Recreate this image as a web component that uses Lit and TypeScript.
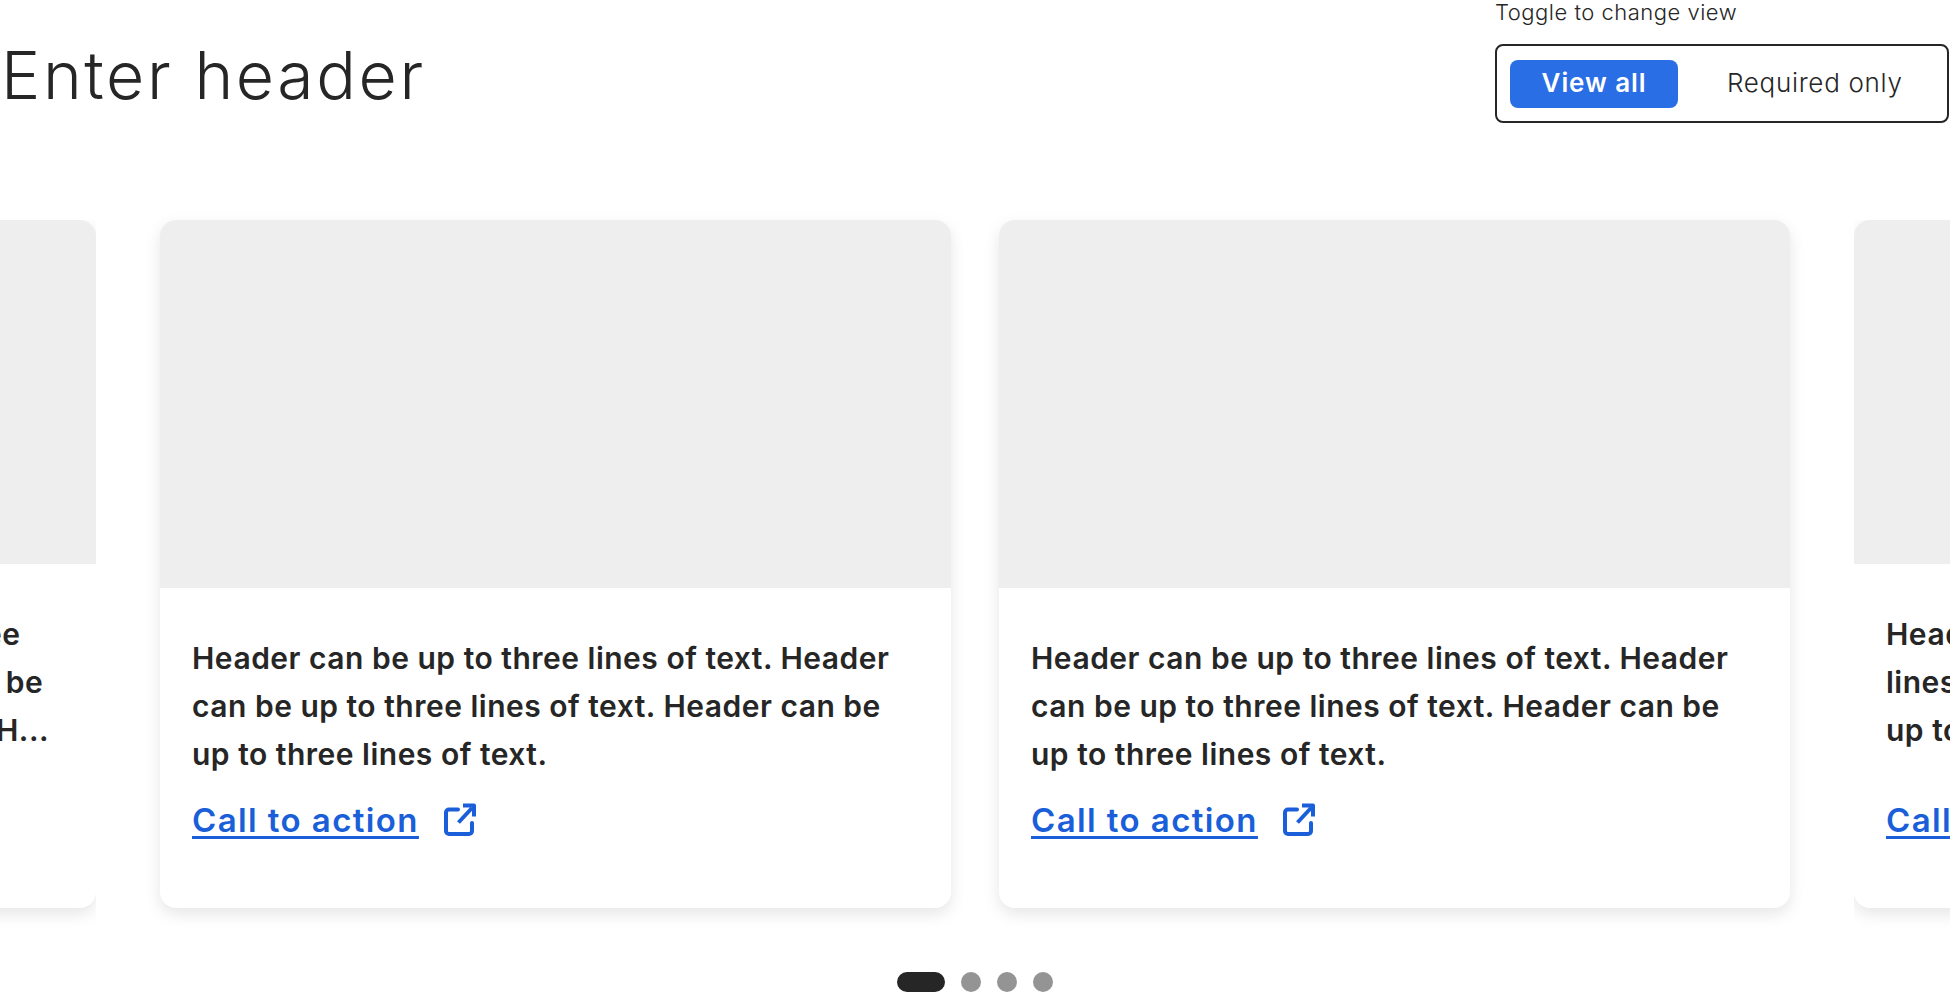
import { LitElement, html, css, svg } from "lit";
import { customElement } from "lit/decorators.js";

const TEXT = "Header can be up to three lines of text. Header can be up to three lines of text. Header can be up to three lines of text.";
const SIDE_TEXT = "Header can be up to three lines of text. Header can be up to three lines of text. H...";

const externalIcon = svg`<path d="M14 5.5H5a3 3 0 0 0-3 3V27a3 3 0 0 0 3 3h20a3 3 0 0 0 3-3v-8" fill="none" stroke="currentColor" stroke-width="4" stroke-linecap="round" stroke-linejoin="round"/><path d="M14.5 18.5 28 4M19 1.5h11v11" fill="none" stroke="currentColor" stroke-width="4" stroke-linejoin="round"/>`;

@customElement("app-root")
export class AppRoot extends LitElement {
  static styles = css`
    :host {
      display: block;
      width: 100%;
      height: 992px;
      overflow: hidden;
      background: #fff;
      color: #262626;
      font-family: "Inter", "Open Sans", sans-serif;
    }
    .top {
      display: flex;
      justify-content: space-between;
      align-items: flex-start;
      height: 220px;
      padding-right: 1px;
      box-sizing: border-box;
    }
    h1 {
      margin: 33px 0 0 1px;
      font-size: 66px;
      line-height: 84px;
      font-weight: 300;
      letter-spacing: 2.6px;
    }
    .toggle-wrap {
      display: flex;
      flex-direction: column;
      width: 454px;
    }
    .toggle-label {
      font-size: 22px;
      line-height: 24px;
      height: 44px;
      font-weight: 300;
      letter-spacing: 0.5px;
    }
    .toggle {
      box-sizing: border-box;
      height: 79px;
      border: 2px solid #262626;
      border-radius: 8px;
      padding: 14px 13px 13px;
      display: flex;
      align-items: stretch;
    }
    .opt {
      display: flex;
      align-items: center;
      justify-content: center;
      font-size: 26px;
      padding-bottom: 4px;
      box-sizing: border-box;
    }
    .opt.on {
      width: 168px;
      background: #2a6ee6;
      color: #fff;
      font-weight: 600;
      border-radius: 8px;
      letter-spacing: 0.9px;
    }
    .opt.off {
      margin-left: 49px;
      font-weight: 300;
      letter-spacing: 0.7px;
    }
    .rail {
      display: flex;
      justify-content: center;
      gap: 48px;
      height: 688px;
    }
    .clip {
      flex: none;
      overflow: hidden;
      height: 740px;
      margin-right: 16px;
    }
    .clip.right {
      margin: 0 0 0 16px;
    }
    .card {
      flex: none;
      width: 791px;
      height: 688px;
      background: #fff;
      border-radius: 16px;
      box-shadow: 0 6px 16px rgba(0, 0, 0, 0.1);
      display: flex;
      flex-direction: column;
      overflow: hidden;
    }
    .card.side {
      width: 495px;
    }
    .img {
      flex: none;
      height: 368px;
      background: #eee;
    }
    .side .img {
      height: 344px;
    }
    .body {
      flex: 1;
      display: flex;
      flex-direction: column;
      justify-content: space-between;
      padding: 46px 32px 64px;
    }
    .txt {
      margin: 0;
      font-size: 30px;
      line-height: 48px;
      font-weight: 600;
      letter-spacing: 0.5px;
    }
    .cta {
      display: flex;
      align-items: center;
      gap: 25px;
      height: 48px;
      font-size: 33px;
      font-weight: 600;
      letter-spacing: 1.4px;
      color: #1a5fd9;
    }
    .cta a {
      color: inherit;
      text-decoration: underline;
      text-decoration-thickness: 3px;
      text-underline-offset: 4px;
    }
    .cta svg {
      width: 32px;
      height: 32px;
      flex: none;
      overflow: visible;
    }
    .dots {
      display: flex;
      justify-content: center;
      gap: 16px;
      margin-top: 64px;
    }
    .dot {
      width: 20px;
      height: 20px;
      border-radius: 10px;
      background: #949494;
    }
    .dot.on {
      width: 48px;
      background: #262626;
    }
  `;

  private card(side = false) {
    return html`<article class="card ${side ? "side" : ""}">
      <div class="img"></div>
      <div class="body">
        <p class="txt">${side ? SIDE_TEXT : TEXT}</p>
        <div class="cta">
          <a href="#">Call to action</a>
          <svg viewBox="0 0 32 32">${externalIcon}</svg>
        </div>
      </div>
    </article>`;
  }

  render() {
    return html`
      <div class="top">
        <h1>Enter header</h1>
        <div class="toggle-wrap">
          <div class="toggle-label">Toggle to change view</div>
          <div class="toggle">
            <div class="opt on">View all</div>
            <div class="opt off">Required only</div>
          </div>
        </div>
      </div>
      <div class="rail">
        <div class="clip">${this.card(true)}</div>
        ${this.card()} ${this.card()}
        <div class="clip right">${this.card(true)}</div>
      </div>
      <div class="dots">
        <span class="dot on"></span><span class="dot"></span><span class="dot"></span><span class="dot"></span>
      </div>
    `;
  }
}
